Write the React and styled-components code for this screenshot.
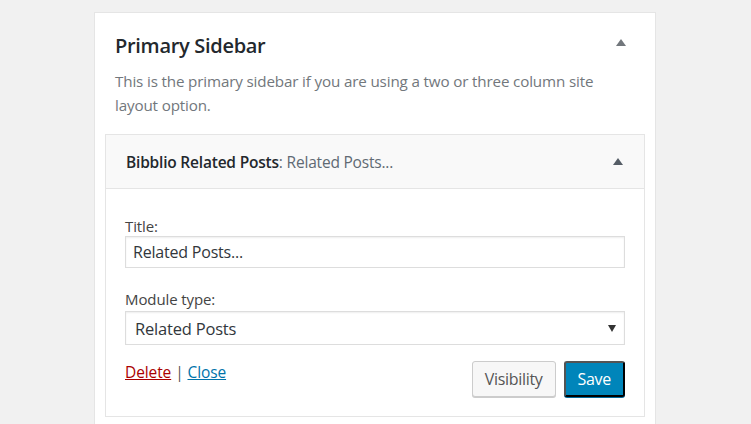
import React from 'react';
import styled, { createGlobalStyle } from 'styled-components';

const Global = createGlobalStyle`
  html, body {
    margin: 0;
    padding: 0;
    background: #f1f1f1;
    font-family: "Open Sans", "Noto Sans", sans-serif;
    color: #23282d;
  }
`;

const Page = styled.div`
  height: 424px;
  overflow: hidden;
  padding: 12px 0 0 94px;
  box-sizing: border-box;
`;

const Panel = styled.div`
  width: 562px;
  min-height: 420px;
  box-sizing: border-box;
  background: #fff;
  border: 1px solid #e5e5e5;
  padding: 0 10px;
`;

const PanelHead = styled.div`
  display: flex;
  justify-content: space-between;
  align-items: flex-start;
  padding: 17px 19px 0 10px;
`;

const PanelTitle = styled.h2`
  margin: 0;
  font-size: 20px;
  line-height: 32px;
  font-weight: 600;
  color: #23282d;
  letter-spacing: -0.3px;
`;

const Toggle = styled.svg`
  width: 10px;
  height: 7px;
  margin-top: ${p => p.$top || 0}px;
  fill: ${p => p.$color || '#72777c'};
`;

const Desc = styled.p`
  margin: 7px 0 0 10px;
  padding-right: 30px;
  font-size: 15.2px;
  line-height: 24px;
  color: #72777c;
  letter-spacing: -0.15px;
`;

const Widget = styled.div`
  margin-top: 17px;
  border: 1px solid #e5e5e5;
`;

const WidgetHead = styled.div`
  height: 54px;
  box-sizing: border-box;
  background: #f9f9f9;
  border-bottom: 1px solid #e5e5e5;
  display: flex;
  align-items: center;
  justify-content: space-between;
  padding: 0 21px 0 20px;
  font-size: 15.5px;
  letter-spacing: -0.2px;
`;

const HeadName = styled.span`
  font-weight: 600;
  color: #23282d;
`;

const HeadSub = styled.span`
  color: #606a73;
`;

const WidgetBody = styled.div`
  padding: 27px 19px 19px 19px;
`;

const Label = styled.div`
  font-size: 15px;
  line-height: 20px;
  color: #444;
  margin-top: ${p => p.$gap || 0}px;
  letter-spacing: -0.1px;
`;

const TextInput = styled.input`
  display: block;
  width: 100%;
  height: 32px;
  box-sizing: border-box;
  border: 1px solid #ddd;
  box-shadow: inset 0 1px 2px rgba(0, 0, 0, 0.07);
  padding: 0 7px;
  font-family: inherit;
  font-size: 16px;
  color: #32373c;
  letter-spacing: -0.2px;
  outline: none;
`;

const SelectWrap = styled.div`
  position: relative;
  margin-top: 2px;
`;

const Select = styled.select`
  display: block;
  width: 100%;
  height: 34px;
  box-sizing: border-box;
  appearance: none;
  -webkit-appearance: none;
  background: #fff;
  border: 1px solid #ddd;
  box-shadow: inset 0 1px 2px rgba(0, 0, 0, 0.07);
  padding: 0 9px;
  font-family: inherit;
  font-size: 16.5px;
  color: #32373c;
  letter-spacing: -0.2px;
  outline: none;
`;

const SelectArrow = styled.svg`
  position: absolute;
  right: 9px;
  top: 14px;
  width: 8px;
  height: 7px;
  fill: #333;
  pointer-events: none;
`;

const Actions = styled.div`
  margin-top: 16px;
  display: flex;
  justify-content: space-between;
  align-items: flex-start;
`;

const Links = styled.div`
  font-size: 15.5px;
  line-height: 22px;
  color: #555;
  letter-spacing: -0.1px;
`;

const Link = styled.a`
  color: ${p => (p.$danger ? '#a00' : '#0073aa')};
  text-decoration: underline;
  cursor: pointer;
`;

const Buttons = styled.div`
  display: flex;
  gap: 8px;
`;

const Button = styled.button`
  height: 36px;
  box-sizing: border-box;
  padding: 0 12px;
  border-radius: 3px;
  font-family: inherit;
  font-size: 16px;
  letter-spacing: -0.3px;
  cursor: pointer;
  background: ${p => (p.$primary ? '#0085ba' : '#f7f7f7')};
  border: 1px solid ${p => (p.$primary ? '#0073aa #0073aa #006799' : '#ccc')};
  color: ${p => (p.$primary ? '#fff' : '#555')};
  box-shadow: ${p => (p.$primary ? '0 1px 0 #006799' : '0 1px 0 #ccc')};
`;

const Triangle = ({ top, color }) => (
  <Toggle viewBox="0 0 10 7" $top={top} $color={color}>
    <polygon points="5,0 10,7 0,7" />
  </Toggle>
);

export default function App() {
  return (
    <>
      <Global />
      <Page>
        <Panel>
          <PanelHead>
            <PanelTitle>Primary Sidebar</PanelTitle>
            <Triangle top={9} />
          </PanelHead>
          <Desc>
            This is the primary sidebar if you are using a two or three column site layout option.
          </Desc>
          <Widget>
            <WidgetHead>
              <span>
                <HeadName>Bibblio Related Posts</HeadName>
                <HeadSub>: Related Posts...</HeadSub>
              </span>
              <Triangle color="#555d66" />
            </WidgetHead>
            <WidgetBody>
              <Label>Title:</Label>
              <TextInput defaultValue="Related Posts..." readOnly />
              <Label $gap={21}>Module type:</Label>
              <SelectWrap>
                <Select defaultValue="related">
                  <option value="related">Related Posts</option>
                </Select>
                <SelectArrow viewBox="0 0 8 7">
                  <polygon points="0,0 8,0 4,7" />
                </SelectArrow>
              </SelectWrap>
              <Actions>
                <Links>
                  <Link $danger>Delete</Link> | <Link>Close</Link>
                </Links>
                <Buttons>
                  <Button>Visibility</Button>
                  <Button $primary>Save</Button>
                </Buttons>
              </Actions>
            </WidgetBody>
          </Widget>
        </Panel>
      </Page>
    </>
  );
}
